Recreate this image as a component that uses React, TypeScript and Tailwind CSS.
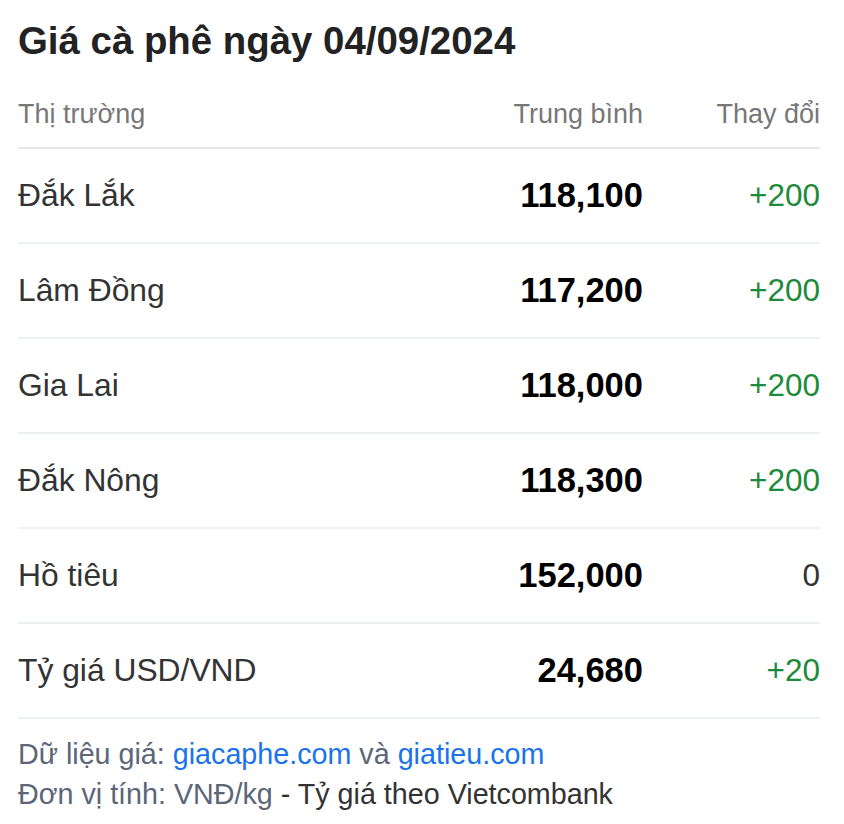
const rows = [
  { name: 'Đắk Lắk', avg: '118,100', change: '+200' },
  { name: 'Lâm Đồng', avg: '117,200', change: '+200' },
  { name: 'Gia Lai', avg: '118,000', change: '+200' },
  { name: 'Đắk Nông', avg: '118,300', change: '+200' },
  { name: 'Hồ tiêu', avg: '152,000', change: '0' },
  { name: 'Tỷ giá USD/VND', avg: '24,680', change: '+20' },
]

export default function App() {
  return (
    <div className="w-[844px] h-[824px] bg-white pl-[18px] pr-[24px] font-['Liberation_Sans',Arial,sans-serif]">
      <div className="h-[81px] flex items-center text-[38.4px] font-bold text-[#222]">
        Giá cà phê ngày 04/09/2024
      </div>

      <div className="h-[68px] flex items-center border-b-2 border-[#e6e6e6] text-[27px] text-[#777]">
        <div className="flex-1">Thị trường</div>
        <div className="text-right">Trung bình</div>
        <div className="w-[177px] text-right">Thay đổi</div>
      </div>

      {rows.map((r) => (
        <div
          key={r.name}
          className="h-[95px] flex items-center border-b-2 border-[#eef1f4]"
        >
          <div className="flex-1 text-[31.8px] text-[#333]">{r.name}</div>
          <div className="text-right text-[34.5px] font-bold text-black">{r.avg}</div>
          <div
            className={
              r.change === '0'
                ? 'w-[177px] text-right text-[31.5px] text-[#333]'
                : 'w-[177px] text-right text-[31.5px] text-[#1e8a3c]'
            }
          >
            {r.change}
          </div>
        </div>
      ))}

      <div className="pt-[15px] text-[28.7px] leading-[40px] text-[#5b6678]">
        <p>
          Dữ liệu giá: <span className="text-[#1a73e8]">giacaphe.com</span> và{' '}
          <span className="text-[#1a73e8]">giatieu.com</span>
        </p>
        <p>
          Đơn vị tính: VNĐ/kg <span className="text-[#333]">- Tỷ giá theo Vietcombank</span>
        </p>
      </div>
    </div>
  )
}
